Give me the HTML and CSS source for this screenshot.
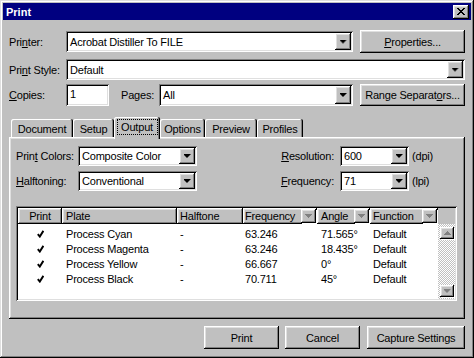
FILE: index.html
```html
<!DOCTYPE html>
<html lang="en">
<head>
    <meta charset="UTF-8">
    <meta name="viewport" content="width=device-width, initial-scale=1.0">
    <title>Print</title>
    <link rel="stylesheet" href="styles.css">
</head>
<body>
    <div class="window">
        <div class="titlebar">
            <span class="title">Print</span>
            <div class="close">
                <svg width="8" height="7" viewBox="0 0 8 7"><path d="M0 0h2v1h-2zM6 0h2v1h-2zM1 1h2v1h-2zM5 1h2v1h-2zM2 2h4v1h-4zM3 3h2v1h-2zM2 4h4v1h-4zM1 5h2v1h-2zM5 5h2v1h-2zM0 6h2v1h-2zM6 6h2v1h-2z"/></svg>
            </div>
        </div>

        <div class="content">
            <div class="row row-printer">
                <span class="label">Pri<u>n</u>ter:</span>
                <div class="combo combo-printer">
                    <span class="value">Acrobat Distiller To FILE</span>
                    <span class="drop"><i class="arrow"></i></span>
                </div>
                <div class="btn btn-side"><u>P</u>roperties...</div>
            </div>

            <div class="row row-style">
                <span class="label">Pri<u>n</u>t Style:</span>
                <div class="combo combo-style">
                    <span class="value">Default</span>
                    <span class="drop"><i class="arrow"></i></span>
                </div>
            </div>

            <div class="row row-copies">
                <span class="label"><u>C</u>opies:</span>
                <div class="field field-copies">1</div>
                <span class="label-pages">Pa<u>g</u>es:</span>
                <div class="combo combo-pages">
                    <span class="value">All</span>
                    <span class="drop"><i class="arrow"></i></span>
                </div>
                <div class="btn btn-side">Range Separat<u>o</u>rs...</div>
            </div>

            <div class="tabs">
                <div class="tab tab-document">Document</div>
                <div class="tab tab-setup">Setup</div>
                <div class="tab tab-output active"><span class="focus">Output</span></div>
                <div class="tab tab-options">Options</div>
                <div class="tab tab-preview">Preview</div>
                <div class="tab tab-profiles">Profiles</div>
            </div>

            <div class="panel">
                <div class="settings">
                    <span class="set-label">Prin<u>t</u> Colors:</span>
                    <div class="combo combo-small">
                        <span class="value">Composite Color</span>
                        <span class="drop"><i class="arrow"></i></span>
                    </div>
                    <span class="set-label-right"><u>R</u>esolution:</span>
                    <div class="combo combo-num">
                        <span class="value">600</span>
                        <span class="drop"><i class="arrow"></i></span>
                    </div>
                    <span class="unit">(dpi)</span>

                    <span class="set-label"><u>H</u>alftoning:</span>
                    <div class="combo combo-small">
                        <span class="value">Conventional</span>
                        <span class="drop"><i class="arrow"></i></span>
                    </div>
                    <span class="set-label-right"><u>F</u>requency:</span>
                    <div class="combo combo-num">
                        <span class="value">71</span>
                        <span class="drop"><i class="arrow"></i></span>
                    </div>
                    <span class="unit">(lpi)</span>
                </div>

                <div class="list">
                    <div class="list-head">
                        <div class="hcell c-print center">Print</div>
                        <div class="hcell c-plate">Plate</div>
                        <div class="hcell c-half">Halftone</div>
                        <div class="hcell c-freq">Frequency<span class="hdrop"><i class="arrow"></i></span></div>
                        <div class="hcell c-angle">Angle<span class="hdrop"><i class="arrow"></i></span></div>
                        <div class="hcell c-func">Function<span class="hdrop"><i class="arrow"></i></span></div>
                        <div class="hfill"></div>
                    </div>
                    <div class="list-body">
                        <div class="rows">
                            <div class="lrow">
                                <span class="c-print center"><svg class="check" width="7" height="8" viewBox="0 0 7 8"><path d="M0.8 4.2L2.8 6.6L6.4 0.8"/></svg></span>
                                <span class="c-plate">Process Cyan</span>
                                <span class="c-half">-</span>
                                <span class="c-freq">63.246</span>
                                <span class="c-angle">71.565°</span>
                                <span class="c-func">Default</span>
                            </div>
                            <div class="lrow">
                                <span class="c-print center"><svg class="check" width="7" height="8" viewBox="0 0 7 8"><path d="M0.8 4.2L2.8 6.6L6.4 0.8"/></svg></span>
                                <span class="c-plate">Process Magenta</span>
                                <span class="c-half">-</span>
                                <span class="c-freq">63.246</span>
                                <span class="c-angle">18.435°</span>
                                <span class="c-func">Default</span>
                            </div>
                            <div class="lrow">
                                <span class="c-print center"><svg class="check" width="7" height="8" viewBox="0 0 7 8"><path d="M0.8 4.2L2.8 6.6L6.4 0.8"/></svg></span>
                                <span class="c-plate">Process Yellow</span>
                                <span class="c-half">-</span>
                                <span class="c-freq">66.667</span>
                                <span class="c-angle">0°</span>
                                <span class="c-func">Default</span>
                            </div>
                            <div class="lrow">
                                <span class="c-print center"><svg class="check" width="7" height="8" viewBox="0 0 7 8"><path d="M0.8 4.2L2.8 6.6L6.4 0.8"/></svg></span>
                                <span class="c-plate">Process Black</span>
                                <span class="c-half">-</span>
                                <span class="c-freq">70.711</span>
                                <span class="c-angle">45°</span>
                                <span class="c-func">Default</span>
                            </div>
                        </div>
                        <div class="scrollbar">
                            <span class="sb-btn up"><i class="arrow"></i></span>
                            <span class="sb-track"></span>
                            <span class="sb-btn"><i class="arrow"></i></span>
                        </div>
                    </div>
                </div>
            </div>

            <div class="footer">
                <div class="btn btn-print">Print</div>
                <div class="btn btn-cancel">Cancel</div>
                <div class="btn btn-capture">Capture Settings</div>
            </div>
        </div>
    </div>
</body>
</html>
```

FILE: styles.css
```css
* {
    box-sizing: border-box;
}

body {
    margin: 0;
    background: #c0c0c0;
    font: 11px "Liberation Sans", Arial, sans-serif;
    letter-spacing: -0.2px;
    color: #000;
}

u {
    text-decoration-thickness: 1px;
    text-underline-offset: 1px;
}

.window {
    width: 474px;
    height: 358px;
    padding: 3px;
    background: #c0c0c0;
    box-shadow: inset -1px -1px #000, inset 1px 1px #dfdfdf, inset -2px -2px #808080, inset 2px 2px #fff;
}

/* title bar */
.titlebar {
    height: 17px;
    background: #000080;
    display: flex;
    align-items: center;
    justify-content: space-between;
    padding: 0 2px 0 3px;
}
.title {
    color: #fff;
    font-weight: bold;
    letter-spacing: 0;
}
.close {
    width: 16px;
    height: 14px;
    background: #c0c0c0;
    display: flex;
    align-items: center;
    justify-content: center;
    box-shadow: inset -1px -1px #000, inset 1px 1px #fff, inset -2px -2px #808080, inset 2px 2px #dfdfdf;
}

/* shared controls */
.btn, .drop, .hcell, .hdrop, .sb-btn {
    background: #c0c0c0;
    box-shadow: inset -1px -1px #000, inset 1px 1px #fff, inset -2px -2px #808080, inset 2px 2px #dfdfdf;
}
.btn {
    height: 23px;
    display: flex;
    align-items: center;
    justify-content: center;
}
.combo, .field {
    height: 21px;
    background: #fff;
    padding: 2px;
    box-shadow: inset 1px 1px #808080, inset -1px -1px #fff, inset 2px 2px #000, inset -2px -2px #dfdfdf;
}
.combo {
    display: flex;
}
.combo .value {
    flex: 1;
    display: flex;
    align-items: center;
    padding-left: 2px;
}
.drop {
    width: 16px;
    display: flex;
    align-items: center;
    justify-content: center;
}
.arrow {
    display: block;
    width: 7px;
    height: 4px;
    background: #000;
    clip-path: polygon(0 0, 7px 0, 7px 1px, 6px 1px, 6px 2px, 5px 2px, 5px 3px, 4px 3px, 4px 4px, 3px 4px, 3px 3px, 2px 3px, 2px 2px, 1px 2px, 1px 1px, 0 1px);
}

.content {
    padding: 10px 6px 0;
}
.row {
    display: flex;
    align-items: center;
}
.label {
    width: 57px;
}
.row-printer {
    height: 23px;
}
.combo-printer {
    width: 287px;
}
.btn-side {
    width: 105px;
    margin-left: 7px;
}
.row-style {
    margin-top: 6px;
}
.combo-style {
    flex: 1;
}
.row-copies {
    margin-top: 4px;
}
.row-copies .combo, .row-copies .btn {
    height: 22px;
}
.field-copies {
    width: 43px;
    height: 22px;
    padding: 4px 4px;
}
.label-pages {
    width: 38px;
    margin-left: 12px;
}
.combo-pages {
    width: 194px;
}

/* tabs */
.tabs {
    margin-top: 11px;
    height: 20px;
    display: flex;
    align-items: flex-end;
    padding-left: 2px;
}
.tab {
    height: 18px;
    display: flex;
    align-items: center;
    justify-content: center;
    border-radius: 2px 2px 0 0;
    box-shadow: inset -1px 0 #000, inset 1px 1px #fff, inset -2px 0 #808080;
    padding-top: 1px;
}
.tab-document { width: 62px; }
.tab-setup { width: 41px; }
.tab-output { width: 46px; }
.tab-options { width: 45px; }
.tab-preview { width: 52px; }
.tab-profiles { width: 46px; }
.tab.active {
    height: 22px;
    margin-bottom: -2px;
    position: relative;
    z-index: 1;
    background: #c0c0c0;
    padding: 2px 2px 4px;
}
.focus {
    border: 1px dotted #000;
    padding: 1px 3px;
    width: 41px;
    text-align: center;
}

.panel {
    height: 182px;
    padding: 9px 0 0 7px;
    box-shadow: inset -1px -1px #000, inset 1px 1px #fff, inset -2px -2px #808080, inset 2px 2px #dfdfdf;
}
.settings {
    display: grid;
    grid-template-columns: 62px 119px 137px 75px auto;
    grid-auto-rows: 20px;
    row-gap: 5px;
    align-items: center;
}
.settings .combo {
    height: 20px;
}
.set-label-right {
    text-align: right;
}
.combo-num {
    margin-left: 6px;
}
.unit {
    padding-left: 3px;
}

/* plate list */
.list {
    margin-top: 15px;
    width: 441px;
    height: 95px;
    padding: 2px;
    background: #fff;
    box-shadow: inset 1px 1px #808080, inset -1px -1px #fff, inset 2px 2px #000, inset -2px -2px #dfdfdf;
}
.list-head {
    display: flex;
    height: 16px;
}
.hcell {
    display: flex;
    align-items: center;
    padding-left: 3px;
}
.hcell.center {
    justify-content: center;
    padding-left: 0;
}
.hfill {
    width: 17px;
    background: #c0c0c0;
}
.hdrop {
    width: 15px;
    height: 14px;
    margin-left: auto;
    margin-right: 1px;
    display: flex;
    align-items: center;
    justify-content: center;
    filter: drop-shadow(1px 1px 0 #fff);
}
.hdrop .arrow, .sb-btn .arrow {
    background: #808080;
}
.c-print { width: 44px; }
.c-plate { width: 115px; padding-left: 4px; }
.c-half { width: 66px; padding-left: 3px; }
.c-freq { width: 74px; padding-left: 2px; }
.c-angle { width: 53px; padding-left: 4px; }
.c-func { width: 68px; padding-left: 3px; }
.list-body {
    display: flex;
    height: 75px;
}
.rows {
    width: 420px;
    padding-top: 2px;
}
.lrow {
    height: 15px;
    display: flex;
    align-items: center;
}
.lrow .center {
    display: flex;
    justify-content: center;
}
.check path {
    fill: none;
    stroke: #000;
    stroke-width: 1.9;
}
.scrollbar {
    width: 17px;
    display: flex;
    flex-direction: column;
    padding: 3px 1px 2px 2px;
    background: repeating-conic-gradient(#c0c0c0 0 25%, #fff 0 50%) 0 0 / 2px 2px;
}
.sb-btn {
    height: 12px;
    display: flex;
    align-items: center;
    justify-content: center;
    filter: drop-shadow(1px 1px 0 #fff);
}
.sb-btn.up .arrow {
    transform: rotate(180deg);
}
.sb-track {
    flex: 1;
}

/* bottom buttons */
.footer {
    margin-top: 7px;
    display: flex;
    justify-content: flex-end;
}
.btn-print { width: 75px; }
.btn-cancel { width: 75px; margin-left: 6px; }
.btn-capture { width: 98px; margin-left: 7px; }
```
